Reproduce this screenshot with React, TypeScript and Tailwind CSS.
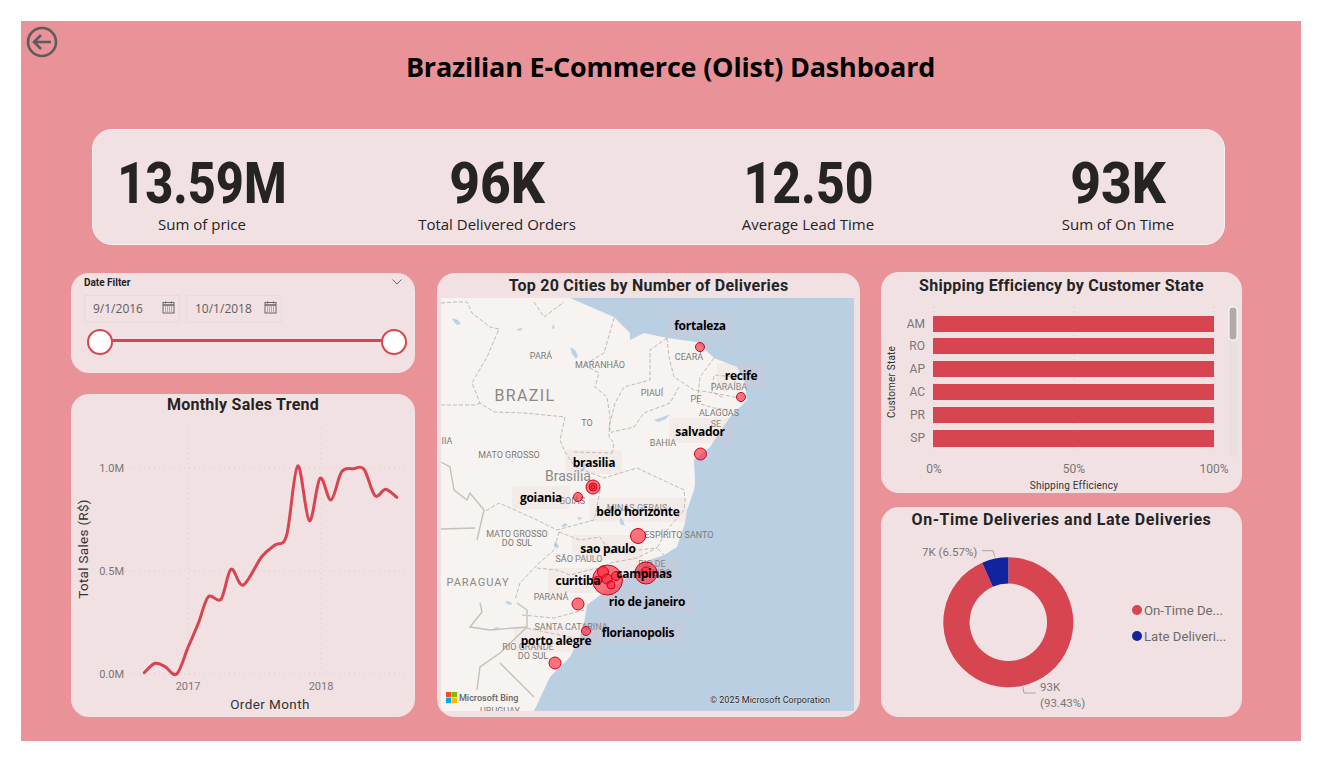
import React from "react";

const din = "[font-family:Roboto,sans-serif]";
const seg = "[font-family:'Open_Sans',sans-serif]";

function Card({ className = "", children }: { className?: string; children: React.ReactNode }) {
  return <div className={`bg-[#f1e1e3] rounded-[18px] overflow-hidden flex flex-col ${className}`}>{children}</div>;
}

function Title({ children, className = "" }: { children: React.ReactNode; className?: string }) {
  return (
    <div className={`${din} font-bold text-[16px] leading-[22px] text-[#252423] text-center tracking-[0.25px] ${className}`}>
      {children}
    </div>
  );
}

function Kpi({ value, label, className, scale }: { value: string; label: string; className: string; scale: string }) {
  return (
    <div className={`w-[200px] flex flex-col items-center ${className}`}>
      <div className={`${din} font-extrabold text-[58px] leading-[68px] text-[#252423] whitespace-nowrap ${scale}`}>{value}</div>
      <div className={`${seg} text-[15px] leading-[20px] text-[#252423] -mt-[3px] whitespace-nowrap`}>{label}</div>
    </div>
  );
}

function CalendarIcon() {
  return (
    <svg width="13" height="13" viewBox="0 0 13 13" className="shrink-0 mb-[3px]">
      <rect x="1" y="1.5" width="11" height="10.5" fill="none" stroke="#666" strokeWidth="1" />
      <path d="M1 4h11" stroke="#666" strokeWidth="1.4" />
      <path d="M3 6h7M3 8h7M3 10h7" stroke="#777" strokeWidth="1" strokeDasharray="1 1" />
      <path d="M3.5 0.5v2M9.5 0.5v2" stroke="#666" strokeWidth="1" />
    </svg>
  );
}

function DateBox({ text }: { text: string }) {
  return (
    <div className={`w-[96px] h-[28px] border border-[#eadadc] flex items-center justify-between pl-[8px] pr-[4px] ${seg} text-[12px] text-[#605e5c]`}>
      <span>{text}</span>
      <CalendarIcon />
    </div>
  );
}

function DateFilter() {
  return (
    <Card className="h-[100px] pt-[1px] px-[13px]">
      <div className="flex items-center justify-between h-[16px]">
        <span className={`${din} font-bold text-[10px] text-[#252423]`}>Date Filter</span>
        <svg width="12" height="8" viewBox="0 0 12 8" className="mr-[-1px]">
          <path d="M1.5 1.5 6 6l4.5-4.5" fill="none" stroke="#666" strokeWidth="1" />
        </svg>
      </div>
      <div className="flex gap-[6px] mt-[5px]">
        <DateBox text="9/1/2016" />
        <DateBox text="10/1/2018" />
      </div>
      <div className="relative h-[26px] mt-[6px] mx-[3px] flex items-center">
        <div className="flex-1 h-[3px] bg-[#d64550] mx-[12px] mb-[3px]" />
        <div className="absolute left-0 top-0 w-[26px] h-[26px] rounded-full bg-white border-2 border-[#d64550]" />
        <div className="absolute left-[294px] top-0 w-[26px] h-[26px] rounded-full bg-white border-2 border-[#d64550]" />
      </div>
    </Card>
  );
}

function smooth(pts: number[][]) {
  let d = `M${pts[0][0]} ${pts[0][1]}`;
  for (let i = 0; i < pts.length - 1; i++) {
    const p0 = pts[Math.max(0, i - 1)];
    const p1 = pts[i];
    const p2 = pts[i + 1];
    const p3 = pts[Math.min(pts.length - 1, i + 2)];
    const c1x = p1[0] + (p2[0] - p0[0]) / 6;
    const c1y = p1[1] + (p2[1] - p0[1]) / 6;
    const c2x = p2[0] - (p3[0] - p1[0]) / 6;
    const c2y = p2[1] - (p3[1] - p1[1]) / 6;
    d += ` C${c1x.toFixed(1)} ${c1y.toFixed(1)} ${c2x.toFixed(1)} ${c2y.toFixed(1)} ${p2[0].toFixed(1)} ${p2[1].toFixed(1)}`;
  }
  return d;
}

const trend = [
  [238, 848], [270, 820], [300, 830], [335, 852], [370, 770], [400, 700], [430, 620], [468, 628], [498, 538],
  [535, 585], [590, 500], [630, 465], [665, 435], [698, 228], [733, 392], [765, 265], [798, 330], [830, 245],
  [865, 236], [897, 238], [930, 317], [962, 298], [995, 322],
].map(([x, y]) => [65 + x / 3, 390 + y / 3]);

function SalesTrend() {
  return (
    <Card className="h-[323px]">
      <Title className="mb-[1px]">Monthly Sales Trend</Title>
      <svg viewBox="71 417 344 300" className={`w-[344px] h-[300px] ${din}`}>
        {[468, 571, 674].map((y) => (
          <line key={y} x1="124" x2="405" y1={y} y2={y} stroke="#d9cfd0" strokeWidth="1" strokeDasharray="1 4" />
        ))}
        {[188, 321].map((x) => (
          <line key={x} x1={x} x2={x} y1="428" y2="674" stroke="#d9cfd0" strokeWidth="1" strokeDasharray="1 4" />
        ))}
        {[["1.0M", 468], ["0.5M", 571], ["0.0M", 674]].map(([t, y]) => (
          <text key={t} x="124" y={Number(y) + 4} textAnchor="end" fontSize="11" fill="#7b7676">{t}</text>
        ))}
        <text x="188" y="690" textAnchor="middle" fontSize="11" fill="#7b7676">2017</text>
        <text x="321" y="690" textAnchor="middle" fontSize="11" fill="#7b7676">2018</text>
        <text x="270" y="709" textAnchor="middle" fontSize="13.5" fill="#333" letterSpacing="0.4">Order Month</text>
        <text transform="translate(88 549) rotate(-90)" textAnchor="middle" fontSize="13.5" fill="#333" letterSpacing="0.3">Total Sales (R$)</text>
        <path d={smooth(trend)} fill="none" stroke="#d64550" strokeWidth="3" strokeLinecap="round" />
      </svg>
    </Card>
  );
}

const regions: [string, number, number][] = [
  ["PARÁ", 541, 359], ["MARANHÃO", 600, 368], ["CEARÁ", 689, 360], ["PARAÍBA", 729, 390], ["PIAUÍ", 652, 396], ["PE", 696, 402],
  ["ALAGOAS", 719, 416], ["SE", 716, 427], ["BAHIA", 663, 446], ["TO", 587, 426], ["MATO GROSSO", 509, 458], ["IIA", 447, 444],
  ["GOIÁS", 572, 504], ["MINAS GERAIS", 637, 511], ["ESPÍRITO SANTO", 679, 538], ["MATO GROSSO", 517, 537], ["DO SUL", 517, 546],
  ["SÃO PAULO", 579, 562], ["RIO DE", 652, 567], ["JANEIRO", 653, 576], ["PARANÁ", 551, 600], ["SANTA CATARINA", 571, 630],
  ["RIO GRANDE", 528, 650], ["DO SUL", 533, 659], ["URUGUAY", 500, 714],
];

const cities: [string, number, number, number, number, number, number][] = [
  ["fortaleza", 667, 313, 67, 24, 700, 330],
  ["recife", 717, 363, 48, 24, 741, 380],
  ["salvador", 669, 418, 64, 25, 700, 436],
  ["brasilia", 565, 450, 57, 24, 594, 467],
  ["goiania", 512, 486, 58, 23, 541, 502],
  ["belo horizonte", 589, 498, 98, 24, 638, 516],
  ["sao paulo", 572, 535, 71, 25, 608, 553],
  ["curitiba", 548, 568, 59, 25, 578, 585],
  ["campinas", 614, 560, 68, 24, 644, 578],
  ["rio de janeiro", 600, 589, 93, 25, 647, 606],
  ["florianopolis", 594, 620, 89, 24, 638, 637],
  ["porto alegre", 514, 628, 85, 24, 556, 645],
];

const bubbles = [
  [700, 347, 4.5], [741, 397, 4.5], [700.5, 454, 6], [578, 497, 4.5], [638, 536, 7.5], [646, 573, 11], [646, 572, 5],
  [607.5, 580, 15], [603, 572, 5.5], [616, 576, 4.5], [607, 579, 5], [611, 585, 4], [598, 580, 4], [578, 604, 6],
  [586, 631, 4.5], [555, 663, 6], [593, 487, 7], [593, 487, 4], [593, 487, 2],
];

const dashed = [
  "M441 303 L454 302 467 302 472 313 490 327 499 329 487 357 472 383 480 403 494 412 524 413 565 417",
  "M534 302 L544 317 564 302",
  "M441 405 L475 405 480 403",
  "M565 417 L560 440 565 452 575 467 604 478 637 468 684 490 685 500 684 510 667 530 657 548 664 555",
  "M574 452 L612 453",
  "M614 318 L604 353 584 365 599 373 595 387 607 397 610 417 609 437 614 443 612 453",
  "M667 338 L650 350 650 380 624 387 615 403 609 427 612 433",
  "M667 338 L669 357 674 377 694 390 714 393 739 398",
  "M679 387 L670 403 644 413 634 427 612 432",
  "M714 358 L700 377 697 403 714 408 730 410",
  "M737 377 L714 375 712 392 724 398",
  "M600 490 L597 507 594 520 557 530 537 520 499 503 484 512",
  "M559 532 L554 550 537 565 520 583 515 600",
  "M537 568 L557 570 570 575 597 568",
  "M559 532 L580 540 600 537 610 553 657 548",
  "M610 563 L637 558 657 548",
  "M522 615 L554 618 584 610",
  "M527 628 L545 632 585 640",
];

const blobs = [
  "M452 318l6 2 3 4-4 1-3-3z", "M570 347l5 3 3 6-2 3-4-5z", "M553 324l2 4-3 1zM517 329l5-1 0 2-4 1z", "M654 420l9-3 7-3-4 5-8 3z",
  "M583 463l3 1-2 7-2-2z", "M561 526l4-3 3 2-4 2z", "M620 517l3 3 2 6-5-2z", "M555 541l4 5-2 3-3-4z", "M614 545l5 1 1 5-5-1z",
  "M505 601l6 1 1 3-5-1z", "M493 628l7-1-3 3z", "M577 517l6 1-4 2z",
];

function MapPanel() {
  const ocean =
    "M570 298 L614 317 630 333 630 340 644 333 667 338 697 342 714 358 737 367 745 383 747 400 730 417 710 447 694 460 695 483 694 490 687 510 685 523 677 547 664 555 644 562 624 580 607 590 587 605 584 623 580 637 570 657 550 677 534 711 854 711 854 298 Z";
  return (
    <Card className="w-[423px] h-[444px]">
      <Title className="pt-[2px] -mb-[1px] shrink-0">Top 20 Cities by Number of Deliveries</Title>
      <svg viewBox="441 298 413 413" className={`w-[413px] h-[413px] mx-[4px] mt-[2px] bg-[#f6f3f0] ${din}`}>
        <path d={ocean} fill="#bbcfe3" />
        <g fill="#bdd2e7">
          {blobs.map((d, i) => <path key={i} d={d} />)}
        </g>
        <g fill="none" stroke="#b0aca8" strokeWidth="0.8" strokeDasharray="4 2">
          {dashed.map((d, i) => <path key={i} d={d} />)}
        </g>
        <g fill="none" stroke="#c4c0bb" strokeWidth="1.4">
          <path d="M441 462 L450 467 454 490 467 500 470 493 484 510 480 527 477 540" />
          <path d="M441 529 L475 528" />
          <path d="M480 603 L482 612 470 627 490 630 527 627 527 610 517 603" />
          <path d="M527 627 L500 653 480 667 477 690 M500 663 L514 677 534 697" />
        </g>
        <g fontSize="9" fill="#7d7b78" textAnchor="middle">
          {regions.map(([t, x, y], i) => <text key={i} x={x} y={y}>{t}</text>)}
          <text x="525" y="401" fontSize="16" letterSpacing="1.4" fill="#8b8886">BRAZIL</text>
          <text x="568" y="481" fontSize="14" fill="#8b8886">Brasília</text>
          <text x="478" y="586" fontSize="11" letterSpacing="1" fill="#8b8886">PARAGUAY</text>
        </g>
        {cities.map(([t, x, y, w, h]) => (
          <rect key={t} x={x} y={y} width={w} height={h} rx="3" fill="#e1bebe" fillOpacity="0.16" />
        ))}
        {bubbles.map(([x, y, r], i) => (
          <circle key={i} cx={x} cy={y} r={r} fill="#ff2436" fillOpacity="0.62" stroke="#d0021b" strokeWidth="1" />
        ))}
        <g className={`${seg} font-bold`} fontSize="12" letterSpacing="-0.25" fill="#000" textAnchor="middle">
          {cities.map(([t, , , , , tx, ty]) => <text key={t} x={tx} y={ty}>{t}</text>)}
        </g>
        <rect x="446" y="692" width="5.2" height="5.2" fill="#f25022" />
        <rect x="451.8" y="692" width="5.2" height="5.2" fill="#7fba00" />
        <rect x="446" y="697.8" width="5.2" height="5.2" fill="#00a4ef" />
        <rect x="451.8" y="697.8" width="5.2" height="5.2" fill="#ffb900" />
        <text x="459" y="701" fontSize="9" fontWeight="500" fill="#666">Microsoft Bing</text>
        <text x="710" y="703" fontSize="9" fill="#222" stroke="#fff" strokeWidth="0.4" paintOrder="stroke">© 2025 Microsoft Corporation</text>
      </svg>
    </Card>
  );
}

function Shipping() {
  const rows: [string, number, number][] = [["AM", 316, 16], ["RO", 338, 16], ["AP", 361, 16], ["AC", 384, 16], ["PR", 407, 16], ["SP", 430, 17]];
  return (
    <Card className="h-[221px]">
      <Title className="pt-[3px] -mb-[1px] shrink-0">Shipping Efficiency by Customer State</Title>
      <svg viewBox="881 296 361 197" className={`w-[361px] h-[197px] ${din}`}>
        {[934, 1074, 1214].map((x) => (
          <line key={x} x1={x} x2={x} y1="307" y2="452" stroke="#d5cbcc" strokeDasharray="1 3" />
        ))}
        {rows.map(([t, y, h]) => (
          <g key={t}>
            <rect x="933" y={y} width="281" height={h} fill="#d64550" />
            <text x="925" y={y + 12} textAnchor="end" fontSize="12" fill="#777">{t}</text>
          </g>
        ))}
        <text x="934" y="473" textAnchor="middle" fontSize="12" fill="#777">0%</text>
        <text x="1074" y="473" textAnchor="middle" fontSize="12" fill="#777">50%</text>
        <text x="1214" y="473" textAnchor="middle" fontSize="12" fill="#777">100%</text>
        <text x="1074" y="489" textAnchor="middle" fontSize="10" fill="#333" letterSpacing="0.2">Shipping Efficiency</text>
        <text transform="translate(895 382) rotate(-90)" textAnchor="middle" fontSize="10" fill="#333" letterSpacing="0.2">Customer State</text>
        <rect x="1229" y="307" width="8" height="150" fill="#e8e0e0" />
        <rect x="1229" y="307" width="8" height="33" rx="3" fill="#b0abab" stroke="#fff" strokeWidth="1" />
      </svg>
    </Card>
  );
}

function Donut() {
  const cx = 1008.3, cy = 622.3, R = 65, r = 38.7;
  const a = (23.65 * Math.PI) / 180;
  const x1 = cx - R * Math.sin(a), y1 = cy - R * Math.cos(a);
  const x2 = cx - r * Math.sin(a), y2 = cy - r * Math.cos(a);
  const blue = `M${cx} ${cy - R} A${R} ${R} 0 0 0 ${x1} ${y1} L${x2} ${y2} A${r} ${r} 0 0 1 ${cx} ${cy - r} Z`;
  const red = `M${cx} ${cy - R} A${R} ${R} 0 1 1 ${x1} ${y1} L${x2} ${y2} A${r} ${r} 0 1 0 ${cx} ${cy - r} Z`;
  return (
    <Card className="h-[210px]">
      <Title className="pt-[2px] tracking-[0.55px] shrink-0">On-Time Deliveries and Late Deliveries</Title>
      <svg viewBox="881 531 361 186" className={`w-[361px] h-[186px] ${din}`}>
        <path d={red} fill="#d64550" />
        <path d={blue} fill="#12239e" />
        <path d="M982 550.7H993L995 557" fill="none" stroke="#a9a3a3" />
        <path d="M1022.7 686.7L1024 693H1035.7" fill="none" stroke="#a9a3a3" />
        <text x="922" y="556" fontSize="11.5" fill="#777">7K (6.57%)</text>
        <text x="1040" y="691" fontSize="11.5" fill="#777">93K</text>
        <text x="1040" y="707" fontSize="11.5" fill="#777">(93.43%)</text>
        <circle cx="1137" cy="610" r="5" fill="#d64550" />
        <circle cx="1137" cy="636" r="5" fill="#12239e" />
        <text x="1144" y="615" fontSize="13.2" fill="#6f6a6a">On-Time De...</text>
        <text x="1144" y="641" fontSize="13.2" fill="#6f6a6a">Late Deliveri...</text>
      </svg>
    </Card>
  );
}

export default function App() {
  return (
    <div className="w-[1320px] h-[763px] bg-white pt-[21px] pl-[21px] overflow-hidden">
      <div className="w-[1280px] h-[720px] bg-[#e99298] flex flex-col relative">
        <svg width="32" height="32" viewBox="0 0 32 32" className="absolute left-[5px] top-[5px]">
          <circle cx="16" cy="16" r="14" fill="none" stroke="#5c5c5c" strokeWidth="2.6" />
          <path d="M25 16H8M15 9l-7 7 7 7" fill="none" stroke="#5c5c5c" strokeWidth="2.6" />
        </svg>
        <h1 className={`${seg} font-bold text-[27px] leading-[38px] tracking-[-0.2px] text-black text-center pt-[27px] pl-[19px] h-[108px]`}>
          Brazilian E-Commerce (Olist) Dashboard
        </h1>
        <div className="ml-[71px] w-[1133px] h-[116px] shrink-0 bg-[#f1e1e3] border border-[#fbf3f3] rounded-[20px] flex items-start pt-[19px]">
          <Kpi value="13.59M" label="Sum of price" className="ml-[9px]" scale="scale-x-[0.84]" />
          <Kpi value="96K" label="Total Delivered Orders" className="ml-[95px]" scale="scale-x-[0.92]" />
          <Kpi value="12.50" label="Average Lead Time" className="ml-[111px]" scale="scale-x-[0.86]" />
          <Kpi value="93K" label="Sum of On Time" className="ml-[110px]" scale="scale-x-[0.92]" />
        </div>
        <div className="flex ml-[50px] mt-[28px] items-start">
          <div className="w-[344px] flex flex-col gap-[21px]">
            <DateFilter />
            <SalesTrend />
          </div>
          <div className="ml-[22px]">
            <MapPanel />
          </div>
          <div className="ml-[21px] w-[361px] flex flex-col gap-[14px] -mt-[1px]">
            <Shipping />
            <Donut />
          </div>
        </div>
      </div>
    </div>
  );
}
